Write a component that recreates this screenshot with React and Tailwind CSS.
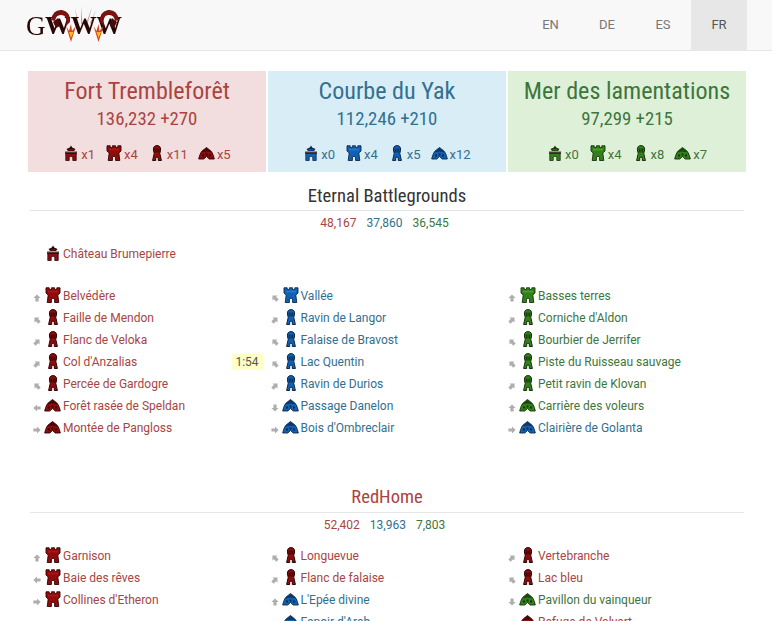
import React from 'react';

const RED = { base: '#8e0c0c', mid: '#b01212', dark: '#2e0505' };
const BLUE = { base: '#1260b0', mid: '#1a78d0', dark: '#0a2a4d' };
const GREEN = { base: '#33801a', mid: '#45a024', dark: '#15330c' };
const TEAMS = { r: RED, b: BLUE, g: GREEN };

const textColor = { r: 'text-[#a94442]', b: 'text-[#31708f]', g: 'text-[#3c763d]' };

// objective icons, drawn on a 16x16 box
const Keep = ({ c }) => (
  <svg width="16" height="16" viewBox="0 0 16 16" className="block">
    <path d="M8 0.5 9.2 2.5 12.5 4 11 6H5L3.5 4 6.8 2.5Z" fill={c.dark} />
    <path d="M5.5 4.2H10.5V5.4H5.5Z" fill={c.base} />
    <path d="M2 6.5H14V9H2Z" fill="#4a3a3a" />
    <path d="M2.8 8.5H13.2V15.5H9.8V12Q8 10.3 6.2 12V15.5H2.8Z" fill={c.base} stroke={c.dark} strokeWidth="0.8" />
  </svg>
);

const Tower = ({ c }) => (
  <svg width="16" height="16" viewBox="0 0 16 16" className="block">
    <path d="M1 0.8H4.2V2.6H6.4V0.8H9.6V2.6H11.8V0.8H15V6L12.8 8 13.8 15.5H9.6V12Q8 10.4 6.4 12V15.5H2.2L3.2 8 1 6Z" fill={c.base} stroke={c.dark} strokeWidth="0.9" />
    <path d="M3 3.5H13V5.5H3Z" fill={c.mid} />
  </svg>
);

const Camp = ({ c }) => (
  <svg width="16" height="16" viewBox="0 0 16 16" className="block">
    <path d="M8 0.6Q11.8 0.6 11.6 5L10.8 8.4 12.4 15.5H9.3V12.3H6.7V15.5H3.6L5.2 8.4 4.4 5Q4.2 0.6 8 0.6Z" fill={c.base} stroke={c.dark} strokeWidth="1" />
    <path d="M5.7 3.5H6.8V7.5H5.7ZM7.5 3.5H8.5V7.5H7.5ZM9.2 3.5H10.3V7.5H9.2Z" fill={c.dark} />
  </svg>
);

const Tent = ({ c }) => (
  <svg width="17" height="16" viewBox="0 0 17 16" className="block -ml-[1px]">
    <path d="M8.5 2.5 11 4.5Q14.8 6.5 16.3 14H11.2L8.5 11.5 5.8 14H0.7Q2.2 6.5 6 4.5Z" fill={c.base} stroke={c.dark} strokeWidth="0.9" />
    <path d="M8.5 3 11 5 14 7.5 8.5 6.5 3 7.5 6 5Z" fill={c.dark} opacity="0.75" />
    <path d="M4 9.5H6V11.5H4ZM11 9.5H13V11.5H11ZM7.6 8.5H9.4V10.5H7.6Z" fill={c.dark} />
  </svg>
);

const ICONS = { keep: Keep, tower: Tower, camp: Camp, tent: Tent };

// small grey arrow, angle in degrees from pointing up
const Arrow = ({ a }) => (
  <svg width="8" height="8" viewBox="0 0 10 10" className="block" style={{ transform: `rotate(${a}deg)` }}>
    <path d="M5 0.5 9.5 5H7V9.5H3V5H0.5Z" fill="#aeaeae" />
  </svg>
);

const Logo = () => (
  <svg width="98" height="40" viewBox="0 0 98 40" className="block blur-[0.3px]">
    <path d="M50 4 54 22 52.5 22ZM56 2 57.5 20 56 20ZM67 3 62 22 60.5 21ZM71 6 66 20 65 19Z" fill="#b98a80" opacity="0.8" />
    <text x="1" y="31" fontFamily="'Liberation Serif', serif" fontSize="27" fill="#2a0505">G</text>
    <text x="20" y="30" fontFamily="'Liberation Serif', serif" fontSize="25" fontWeight="700" fill="#2a0505" textLength="77" lengthAdjust="spacingAndGlyphs">WWW</text>
    <path d="M26 16Q28 5 37 6Q46 8 45 18L41 22Q43 12 37 11Q31 10 30 17Z" fill="#7a1410" />
    <path d="M94 16Q92 5 83 6Q74 8 75 18L79 22Q77 12 83 11Q89 10 90 17Z" fill="#7a1410" />
    <path d="M28 18 33 14 35 22 31 24ZM92 18 87 14 85 22 89 24Z" fill="#4a0c08" />
    <path d="M41 22 46 38 51 22 47 27 46 20 44 27ZM68.5 22 73.5 38 78.5 22 74.5 27 73.5 20 71.5 27Z" fill="#d8481a" />
    <path d="M44 28 46 34 48.5 28ZM71.5 28 73.5 34 76 28Z" fill="#f7b91e" />
  </svg>
);

const teams = [
  { t: 'r', name: 'Fort Trembleforêt', score: '136,232 +270', counts: ['x1', 'x4', 'x11', 'x5'] },
  { t: 'b', name: 'Courbe du Yak', score: '112,246 +210', counts: ['x0', 'x4', 'x5', 'x12'] },
  { t: 'g', name: 'Mer des lamentations', score: '97,299 +215', counts: ['x0', 'x4', 'x8', 'x7'] },
];

const TeamCard = ({ t, name, score, counts }) => (
  <div className={`flex-1 h-[101px] flex flex-col items-center ${t === 'r' ? 'bg-[#f2dede]' : t === 'b' ? 'bg-[#d9edf7]' : 'bg-[#dff0d8]'} ${textColor[t]}`}>
    <div className="mt-[5px] text-[24.1px] leading-[30px] condensed">{name}</div>
    <div className="mt-[1px] text-[18.8px] leading-[24px] condensed">{score}</div>
    <div className="mt-[15px] flex text-[13px] leading-[18px]">
      {['keep', 'tower', 'camp', 'tent'].map((k, i) => {
        const Icon = ICONS[k];
        return (
          <div key={k} className="flex items-center px-[5.5px]">
            <div className="-mt-[5px] mr-[2px]"><Icon c={TEAMS[t]} /></div>
            <span>{counts[i]}</span>
          </div>
        );
      })}
    </div>
  </div>
);

const Row = ({ r }) => {
  const Icon = ICONS[r.k];
  return (
    <div className={`relative flex items-center h-[22px] text-[12px] ${textColor[r.t]}`}>
      <div className="w-[18px] flex justify-center pt-[3px]">{r.a !== undefined && <Arrow a={r.a} />}</div>
      <div className="w-[16px] -ml-[1px] mr-[1px] -mt-[2px]"><Icon c={TEAMS[r.t]} /></div>
      <span className="ml-[1px]">{r.n}</span>
      {r.timer && <span className="ml-auto mr-[3px] w-[31px] h-[16px] bg-[#ffffc8] text-[#555] text-center leading-[16px]">{r.timer}</span>}
    </div>
  );
};

const Column = ({ rows }) => (
  <div className="w-[237.5px]">
    {rows.map((r) => <Row key={r.n} r={r} />)}
  </div>
);

const ebRows = [
  [
    { t: 'r', k: 'tower', a: 0, n: 'Belvédère' },
    { t: 'r', k: 'camp', a: -45, n: 'Faille de Mendon' },
    { t: 'r', k: 'camp', a: 45, n: 'Flanc de Veloka' },
    { t: 'r', k: 'camp', a: 45, n: "Col d'Anzalias", timer: '1:54' },
    { t: 'r', k: 'camp', a: -45, n: 'Percée de Gardogre' },
    { t: 'r', k: 'tent', a: -90, n: 'Forêt rasée de Speldan' },
    { t: 'r', k: 'tent', a: 90, n: 'Montée de Pangloss' },
  ],
  [
    { t: 'b', k: 'tower', a: -45, n: 'Vallée' },
    { t: 'b', k: 'camp', a: 45, n: 'Ravin de Langor' },
    { t: 'b', k: 'camp', a: -45, n: 'Falaise de Bravost' },
    { t: 'b', k: 'camp', a: -45, n: 'Lac Quentin' },
    { t: 'b', k: 'camp', a: 45, n: 'Ravin de Durios' },
    { t: 'b', k: 'tent', a: 180, n: 'Passage Danelon' },
    { t: 'b', k: 'tent', a: 90, n: "Bois d'Ombreclair" },
  ],
  [
    { t: 'g', k: 'tower', a: 0, n: 'Basses terres' },
    { t: 'g', k: 'camp', a: 45, n: "Corniche d'Aldon" },
    { t: 'g', k: 'camp', a: -45, n: 'Bourbier de Jerrifer' },
    { t: 'g', k: 'camp', a: -45, n: 'Piste du Ruisseau sauvage' },
    { t: 'g', k: 'camp', a: 45, n: 'Petit ravin de Klovan' },
    { t: 'g', k: 'tent', a: 0, n: 'Carrière des voleurs' },
    { t: 'b', k: 'tent', a: 90, n: 'Clairière de Golanta' },
  ],
];

const redRows = [
  [
    { t: 'r', k: 'tower', a: 0, n: 'Garnison' },
    { t: 'r', k: 'tower', a: -90, n: 'Baie des rêves' },
    { t: 'r', k: 'tower', a: 90, n: "Collines d'Etheron" },
  ],
  [
    { t: 'r', k: 'camp', a: -45, n: 'Longuevue' },
    { t: 'r', k: 'camp', a: 45, n: 'Flanc de falaise' },
    { t: 'b', k: 'tent', a: 0, n: "L'Epée divine" },
    { t: 'b', k: 'tent', a: 0, n: "Espoir d'Arah" },
  ],
  [
    { t: 'r', k: 'camp', a: 45, n: 'Vertebranche' },
    { t: 'r', k: 'camp', a: -45, n: 'Lac bleu' },
    { t: 'g', k: 'tent', a: 180, n: 'Pavillon du vainqueur' },
    { t: 'r', k: 'tent', a: 0, n: 'Refuge de Valvert' },
  ],
];

const Heading = ({ title, scores, color, pad }) => (
  <>
    <div className={`text-center text-[18.6px] leading-[24px] condensed border-b border-[#e5e5e5] ml-[2px] ${pad} ${color}`}>{title}</div>
    <div className="flex justify-center gap-[10px] pr-[3px] mt-[3px] text-[12px] leading-[18px]">
      <span className="text-[#a94442]">{scores[0]}</span>
      <span className="text-[#31708f]">{scores[1]}</span>
      <span className="text-[#3c763d]">{scores[2]}</span>
    </div>
  </>
);

export default function App() {
  return (
    <div className="h-[621px] overflow-hidden bg-white font-['Roboto',sans-serif]">
      <style>{`.condensed { font-family: 'Roboto Condensed', 'Roboto', sans-serif; font-stretch: 75%; }`}</style>

      <header className="h-[51px] bg-[#f8f8f8] border-b border-[#e7e7e7] flex justify-between pl-[25px] pr-[25px]">
        <div className="pt-[4px]"><Logo /></div>
        <nav className="flex text-[13px] text-[#777]">
          <a className="w-[57px] flex items-center justify-center">EN</a>
          <a className="w-[56px] flex items-center justify-center">DE</a>
          <a className="w-[56px] flex items-center justify-center">ES</a>
          <a className="w-[56px] flex items-center justify-center bg-[#e7e7e7] text-[#555]">FR</a>
        </nav>
      </header>

      <main className="px-[28px] pt-[20px]">
        <div className="flex gap-[2px] mr-[-2px]">
          {teams.map((x) => <TeamCard key={x.t} {...x} />)}
        </div>

        <section className="mt-[12px]">
          <Heading title="Eternal Battlegrounds" scores={['48,167', '37,860', '36,545']} color="text-[#333]" pad="pb-[2px]" />
          <div className="mt-[11px] h-[22px]">
            <Column rows={[{ t: 'r', k: 'keep', n: 'Château Brumepierre' }]} />
          </div>
          <div className="flex mt-[20px]">
            {ebRows.map((rows, i) => <Column key={i} rows={rows} />)}
          </div>
        </section>

        <section className="mt-[46px]">
          <Heading title="RedHome" scores={['52,402', '13,963', '7,803']} color="text-[#a94442]" pad="pb-[3px]" />
          <div className="flex mt-[11px]">
            {redRows.map((rows, i) => <Column key={i} rows={rows} />)}
          </div>
        </section>
      </main>
    </div>
  );
}
